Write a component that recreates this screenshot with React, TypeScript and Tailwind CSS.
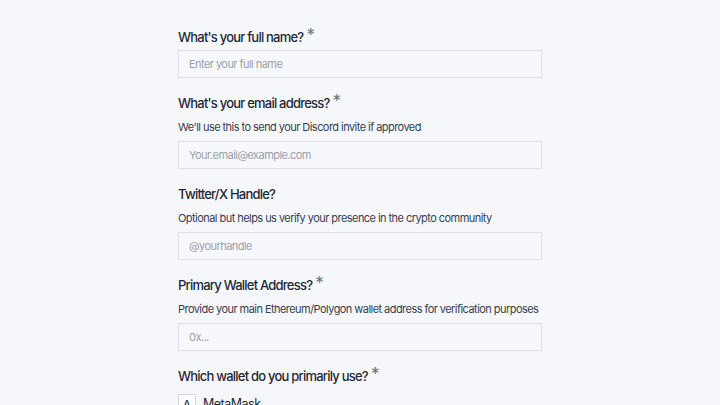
const fields = [
  { label: "What's your full name?", required: true, placeholder: "Enter your full name" },
  {
    label: "What's your email address?",
    required: true,
    desc: "We'll use this to send your Discord invite if approved",
    placeholder: "Your.email@example.com",
  },
  {
    label: "Twitter/X Handle?",
    required: false,
    desc: "Optional but helps us verify your presence in the crypto community",
    placeholder: "@yourhandle",
  },
  {
    label: "Primary Wallet Address?",
    required: true,
    desc: "Provide your main Ethereum/Polygon wallet address for verification purposes",
    placeholder: "0x...",
  },
];

function Label({ text, required }: { text: string; required: boolean }) {
  return (
    <div className="flex items-start h-5 text-[13px] leading-5 font-medium tracking-[-0.06em] text-[#1f2937]">
      <span>{text}</span>
      {required && (
        <span className="ml-[3px] -mt-[2px] text-[17px] leading-5 font-normal tracking-normal text-[#6b7280]">*</span>
      )}
    </div>
  );
}

export default function App() {
  return (
    <div
      className="min-h-screen w-full bg-[#f6f7fa] flex justify-center"
      style={{ fontFamily: "Inter, 'Noto Sans', sans-serif" }}
    >
      <div className="w-[364px] pt-[27px] flex flex-col gap-[15px]">
        {fields.map((f) => (
          <div key={f.label} className="flex flex-col">
            <Label text={f.label} required={f.required} />
            {f.desc && (
              <p className="mt-[6px] whitespace-nowrap text-[11px] leading-4 tracking-[-0.05em] text-[#374151]">
                {f.desc}
              </p>
            )}
            <input
              className={`${f.desc ? "mt-[6px]" : "mt-[3px]"} h-[28px] w-full border border-[#dde1e7] bg-[#f7f8fb] px-[10px] text-[11px] tracking-[-0.05em] text-[#1f2937] placeholder:text-[#9aa1ac] outline-none`}
              placeholder={f.placeholder}
            />
          </div>
        ))}
        <div className="flex flex-col">
          <Label text="Which wallet do you primarily use?" required />
          <div className="mt-[8px] flex items-start gap-[7px]">
            <span className="flex h-[20px] w-[18px] items-center justify-center border border-[#d5d9e0] bg-white text-[11px] font-medium text-[#374151]">
              A
            </span>
            <span className="text-[12.5px] leading-5 tracking-[-0.04em] text-[#1f2937]">MetaMask</span>
          </div>
        </div>
      </div>
    </div>
  );
}
